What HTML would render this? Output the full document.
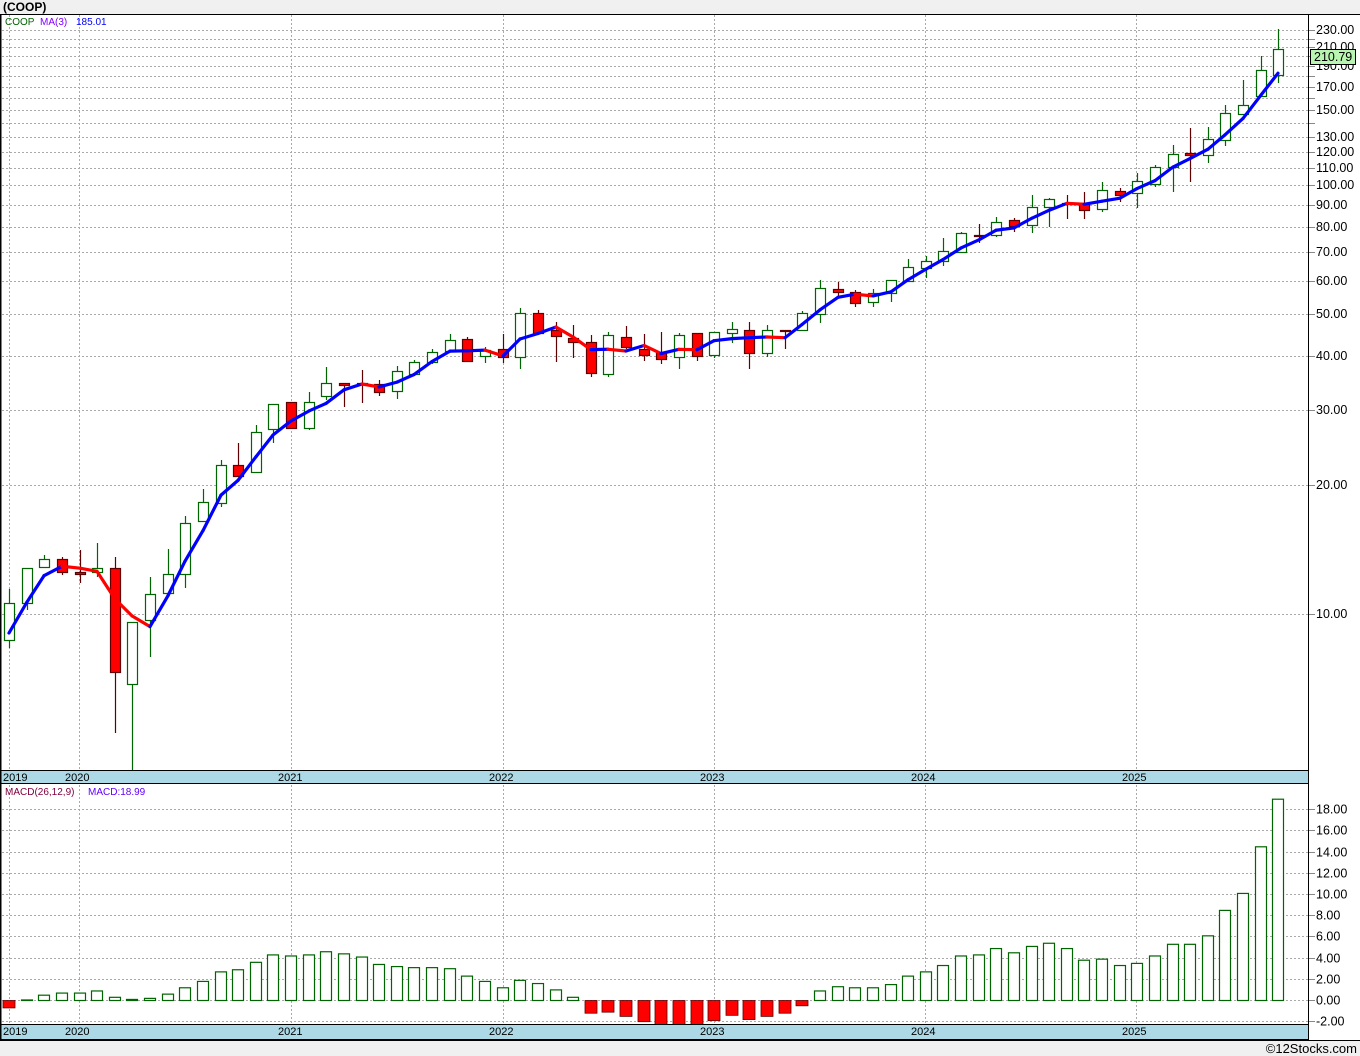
<!DOCTYPE html>
<html><head><meta charset="utf-8">
<style>
html,body{margin:0;padding:0;background:#f0f0f0;}
body{width:1360px;height:1056px;overflow:hidden;position:relative;font-family:"Liberation Sans",Tahoma,sans-serif;}
svg{position:absolute;left:0;top:0;}
</style></head>
<body>
<svg id="s" width="1360" height="1056" xmlns="http://www.w3.org/2000/svg" font-family="Liberation Sans, sans-serif">
<rect x="0" y="0" width="1360" height="1056" fill="#f0f0f0"/>
<rect x="0" y="14" width="1360" height="1026" fill="#ffffff"/>
<text x="3" y="11" font-size="12" font-weight="bold" fill="#000">(COOP)</text>
<g id="g"></g>
<text x="1357" y="1053" font-size="13" fill="#000" text-anchor="end">©12Stocks.com</text>
</svg>
<script>
var NS="http://www.w3.org/2000/svg",G=document.getElementById("g");
function el(t,a,txt){var e=document.createElementNS(NS,t);for(var k in a)e.setAttribute(k,a[k]);if(txt!=null)e.textContent=txt;G.appendChild(e);return e;}
function py(p){return 614-129*Math.log2(p/10);}
function yp(y){return 10*Math.pow(2,(614-y)/129);}
var lab=[230,210,190,170,150,130,120,110,100,90,80,70,60,50,40,30,20,10];
var extra=[220,200,180,160,140];
lab.concat(extra).forEach(function(p){var y=Math.round(py(p))+0.5;
 el("line",{x1:2,x2:1308,y1:y,y2:y,stroke:"#aaa","stroke-dasharray":"2,2"});
 el("line",{x1:1309,x2:1315,y1:y,y2:y,stroke:"#888"});});
lab.forEach(function(p){var y=Math.round(py(p));el("text",{x:1316,y:y+4,"font-size":"12.5",fill:"#000"},p.toFixed(2));});
for(var k=-1;k<=9;k++){var y=Math.round(1000-21.2*k)+0.5;
 el("line",{x1:2,x2:1308,y1:y,y2:y,stroke:"#aaa","stroke-dasharray":"2,2"});
 el("line",{x1:1309,x2:1315,y1:y,y2:y,stroke:"#888"});
 el("text",{x:1316,y:y+4,"font-size":"12.5",fill:"#000"},(k*2).toFixed(2));}
[9,79,291,503,714,925,1136].forEach(function(x){
 el("line",{x1:x+0.5,x2:x+0.5,y1:15,y2:770,stroke:"#aaa","stroke-dasharray":"2,2"});
 el("line",{x1:x+0.5,x2:x+0.5,y1:785,y2:1024,stroke:"#aaa","stroke-dasharray":"2,2"});});
var C=[[640,603,589,648],[603,568,568,610],[567,559,555,567],[559,572,557,575],[572,574,550,583],[572,568,543,577],[568,672,557,733],[684,622,622,770],[620,594,577,657],[593,574,549,593],[574,523,516,588],[521,502,489,521],[503,465,460,507],[465,476,443,476],[472,432,425,472],[429,404,404,443],[402,428,402,428],[428,402,392,430],[396,383,367,400],[383,385,383,407],[383,384,370,403],[384,392,380,396],[391,371,366,399],[374,362,360,374],[362,352,349,364],[351,340,334,351],[339,361,337,362],[356,350,347,363],[349,357,334,363],[357,313,308,369],[313,333,310,333],[330,336,322,362],[338,342,325,358],[342,373,335,377],[374,335,332,377],[337,347,326,349],[349,355,334,361],[353,359,332,364],[357,335,333,369],[333,356,333,361],[355,332,332,358],[333,329,322,343],[330,353,322,369],[353,330,325,357],[330,331,330,349],[330,313,311,330],[314,288,280,323],[289,292,282,297],[292,303,290,307],[302,293,289,307],[293,280,280,302],[281,267,259,281],[268,261,256,278],[261,251,238,266],[252,233,232,253],[235,236,224,243],[235,222,217,237],[220,226,218,232],[225,207,195,233],[207,199,198,227],[203,204,195,219],[203,210,192,219],[209,190,182,212],[191,195,188,202],[193,181,173,208],[184,167,165,187],[167,154,145,192],[153,155,128,182],[155,139,127,163],[140,113,105,146],[114,105,80,114],[96,70,56,96],[75,49,29,83]];
function cx(i){return Math.round(9+17.63*i);}
var cl=C.map(function(c){return yp(c[1]);});
var ma=[];for(var i=0;i<C.length;i++){if(i==0)ma.push(633);else if(i==1)ma.push(602);else ma.push(py((cl[i]+cl[i-1]+cl[i-2])/3));}
C.forEach(function(c,i){var x=cx(i),up=c[1]<=c[0],col=up?"#006400":"#600000";
 el("line",{x1:x+0.5,x2:x+0.5,y1:c[2],y2:c[3],stroke:col,"stroke-width":1.2});
 var t=Math.min(c[0],c[1]),h=Math.max(Math.abs(c[0]-c[1]),1);
 el("rect",{x:x-5+0.5,y:t+0.5,width:10,height:h,fill:up?"#fff":"#ff0000",stroke:col,"stroke-width":1.2});});
for(var i=1;i<C.length;i++){el("line",{x1:cx(i-1),y1:ma[i-1],x2:cx(i),y2:ma[i],stroke:ma[i]<=ma[i-1]?"#0000ff":"#ff0000","stroke-width":3.2,"stroke-linecap":"round"});}
var M=[-0.7,0.05,0.5,0.7,0.7,0.9,0.3,0.1,0.2,0.6,1.2,1.8,2.7,2.9,3.6,4.3,4.2,4.3,4.6,4.4,4.1,3.4,3.2,3.1,3.1,3.0,2.3,1.8,1.2,1.9,1.6,1.0,0.3,-1.2,-1.1,-1.5,-2.0,-2.4,-2.3,-2.4,-1.9,-1.4,-1.8,-1.5,-1.2,-0.5,0.9,1.3,1.2,1.2,1.5,2.3,2.7,3.3,4.2,4.3,4.9,4.5,5.1,5.4,4.9,3.8,3.9,3.3,3.5,4.2,5.3,5.3,6.1,8.5,10.1,14.5,18.99];
M.forEach(function(m,i){var x=cx(i),y=1000-10.6*m;
 if(m>=0)el("rect",{x:x-5.5,y:y+0.5,width:11,height:Math.max(1000-y,0.5),fill:"#fff",stroke:"#006400","stroke-width":1.2});
 else el("rect",{x:x-6,y:1000.5,width:12,height:y-1000,fill:"#ff0000",stroke:"#600000","stroke-width":0.8});});
[[770,784],[1024,1040]].forEach(function(b){el("rect",{x:0,y:b[0],width:1308,height:b[1]-b[0],fill:"#add8e6"});
 el("line",{x1:0,x2:1309,y1:b[0]+0.5,y2:b[0]+0.5,stroke:"#000"});
 el("line",{x1:0,x2:1309,y1:b[1]-0.5,y2:b[1]-0.5,stroke:"#000"});
 [[3,"2019"],[65,"2020"],[278,"2021"],[489,"2022"],[700,"2023"],[911,"2024"],[1122,"2025"]].forEach(function(t){
  el("text",{x:t[0],y:b[0]+11,"font-size":"11",fill:"#000"},t[1]);});});
el("line",{x1:0,x2:1360,y1:14.5,y2:14.5,stroke:"#000"});
el("line",{x1:0.75,x2:0.75,y1:14,y2:1040,stroke:"#000","stroke-width":1.5});
el("line",{x1:1308.5,x2:1308.5,y1:14,y2:1040,stroke:"#000"});
el("line",{x1:0,x2:1360,y1:1040.5,y2:1040.5,stroke:"#000"});
el("text",{x:5,y:25,"font-size":"10",fill:"#006400"},"COOP");
el("text",{x:40,y:25,"font-size":"10",fill:"#8000ff"},"MA(3)");
el("text",{x:76,y:25,"font-size":"10",fill:"#0000ff"},"185.01");
el("text",{x:5,y:795,"font-size":"10",fill:"#800040"},"MACD(26,12,9)");
el("text",{x:88,y:795,"font-size":"10",fill:"#6000ff"},"MACD:18.99");
el("rect",{x:1310.5,y:49.5,width:45,height:15,fill:"#b8f5b0",stroke:"#000"});
el("text",{x:1314,y:61,"font-size":"12.5",fill:"#000"},"210.79");
</script>
</body></html>
